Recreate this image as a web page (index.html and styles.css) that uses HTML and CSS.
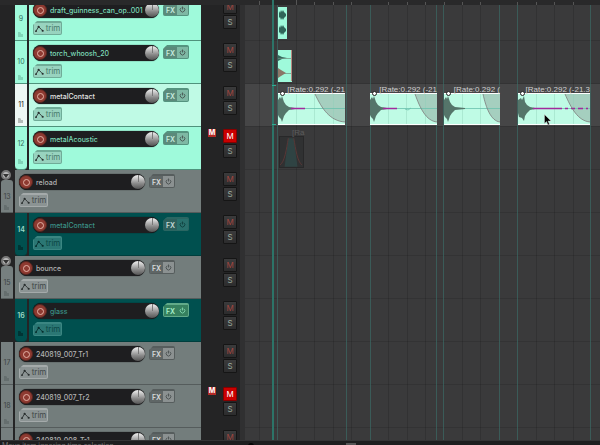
FILE: index.html
```html
<!DOCTYPE html>
<html lang="en">
<head>
<meta charset="utf-8">
<title>Arrange</title>
<link rel="stylesheet" href="styles.css">
</head>
<body>
<svg class="defs" aria-hidden="true">
  <symbol id="env" viewBox="0 0 10 8"><path d="M1 7 L4 2 L7 5 L9 7" fill="none" stroke="currentColor"/><circle cx="1" cy="7" r="1"/><circle cx="4" cy="2" r="1.2"/><circle cx="8.6" cy="6.6" r="1.2"/></symbol>
  <symbol id="power" viewBox="0 0 8 8"><path d="M2.6 2 A2.6 2.6 0 1 0 5.4 2 M4 .6 V4" fill="none" stroke="currentColor" stroke-width=".9"/></symbol>
  <symbol id="folder" viewBox="0 0 6 5"><path d="M0 0h2l1 1v1h2v3H0z" opacity=".8"/></symbol>
</svg>
<div class="ruler"><svg width="355" height="5" aria-hidden="true"><path d="M14.5 1v4M51.5 0v5M69.5 2v3M88.5 2v3M106.5 2v3M143.5 2v3M162.5 2v3M180.5 2v3M199.5 2v3M217.5 2v3M235.5 2v3M272.5 2v3M291.5 2v3M309.5 2v3M328.5 2v3" stroke="#555"/><path d="M28 0v5" stroke="#2c7468" stroke-width="2"/></svg></div>
<main class="main">
  <section class="tracks" id="tracks" aria-label="Tracks"></section>
  <section class="arrange" aria-label="Timeline">
    <div class="lanes">
      <div class="lane">
        <div class="item mint" style="left:33px;width:9px"><svg viewBox="0 0 9 31"><path d="M1 4l1 2 1-3 1 2 1-2 1 2 2 2v2l-2 2-1 2-1-2-1 2-1-3-1 1zM1 19l1 2 1-3 1 2 1-2 1 2 2 2v2l-2 2-1 2-1-2-1 2-1-3-1 1z" fill="#2f6659"/></svg></div>
      </div>
      <div class="lane">
        <div class="item mint" style="left:33px;width:14px"><svg viewBox="0 0 14 31"><path d="M0 5l4 2 5 1-5 1-4 2z" fill="#35695c"/><path d="M0 8.500h14M0 23.500h14" stroke="#6f8f80" stroke-width=".7"/><path d="M0 18l3 2 5 3-5 3-3 2z" fill="#8a7768"/><path d="M13.500 0v31" stroke="#b98981"/></svg></div>
      </div>
      <div class="lane selected">
        <div class="item sel" style="left:33px;width:67px"><span class="label">[Rate:0.292 (-21</span><svg viewBox="0 0 67 30"><path class="fade" d="M37 0C44 15 52 27 67 28V0z"/><path class="grid" d="M18.500 0v31M36.500 0v31M55.500 0v31"/><path class="line" d="M14 14.500h53"/><path class="wave" d="M0 6l2-3 1 2 1-3 2 6 2 3 3 2 6 1v1l-6 1-3 3-2 3-2 6-1-3-2-2-2-4z"/><path class="hot" d="M13 14.500h14"/><path class="curve" d="M37 0C44 15 52 27 67 28"/></svg><i class="pin"></i></div>
        <div class="item sel" style="left:125px;width:67px"><span class="label">[Rate:0.292 (-21</span><svg viewBox="0 0 67 30"><path class="fade" d="M45 0C50 14 56 27 67 28V0z"/><path class="grid" d="M18.500 0v31M36.500 0v31M55.500 0v31"/><path class="line" d="M14 14.500h53M35 15l3 1 3-2"/><path class="wave" d="M0 6l2-3 1 2 1-3 2 6 2 3 3 2 6 1v1l-6 1-3 3-2 3-2 6-1-3-2-2-2-4z"/><path class="hot" d="M13 14.500h14"/><path class="curve" d="M45 0C50 14 56 27 67 28"/></svg><i class="pin"></i></div>
        <div class="item sel" style="left:199px;width:56px"><span class="label">[Rate:0.292 (</span><svg viewBox="0 0 56 30"><path class="fade" d="M39 0C42 14 47 27 56 28V0z"/><path class="grid" d="M18.500 0v31M36.500 0v31"/><path class="line" d="M14 14.500h42"/><path class="wave" d="M0 6l2-3 1 2 1-3 2 6 2 3 3 2 10 1v1l-10 1-3 3-2 3-2 6-1-3-2-2-2-4z"/><path class="curve" d="M39 0C42 14 47 27 56 28"/></svg><i class="pin"></i></div>
        <div class="item sel" style="left:273px;width:72px"><span class="label">[Rate:0.292 (-21.3</span><svg viewBox="0 0 72 30"><path class="fade" d="M47 0C53 14 60 27 72 28V0z"/><path class="grid" d="M18.500 0v31M36.500 0v31M55.500 0v31"/><path class="line" d="M14 14.500h58"/><path class="wave" d="M0 6l3-2 1 2 2-4 1 6 2 3 3 2 5 1v1l-5 1-3 3-2 3-1 5-2-3-3-1-1-4z"/><path class="hot" d="M15 14.500h29M47 14.500h3M53 14.500h4M60 14.500h5M68 14.500h2"/><path class="curve" d="M47 0C53 14 60 27 72 28"/></svg><i class="pin"></i></div>
      </div>
      <div class="lane">
        <div class="item muted" style="left:34px;width:25px"><span class="label">[Ra</span><svg viewBox="0 0 25 31"><path d="M9 0h6l4 31H5z" fill="#2f4343"/><path d="M0 29C5 26 7 12 9 0M24 29C19 26 17 12 15 0" fill="none" stroke="#5b3836"/></svg></div>
      </div>
      <div class="lane"></div><div class="lane"></div><div class="lane"></div><div class="lane"></div><div class="lane"></div><div class="lane"></div><div class="lane"></div>
    </div>
    <svg class="markers" width="355" height="435" aria-hidden="true">
      <path d="M14.500 0v435M51.500 0v435M69.500 0v435M88.500 0v435M106.500 0v435M143.500 0v435M162.500 0v435M180.500 0v435M217.500 0v435M235.500 0v435M291.500 0v435M309.500 0v435M328.500 0v435" stroke="#000" opacity=".13"/>
      <path d="M32.500 0v435M101.500 0v435M125.500 0v435M191.500 0v435M198.500 0v435M254.500 0v435M272.500 0v435M345.500 0v435" stroke="#3a6e68" opacity=".65"/>
      <path d="M28 0v435" stroke="#2c7468" stroke-width="2"/>
      <path d="M27 80.500h4M27 119.500h4" stroke="#2fae93"/>
    </svg>
    <svg class="cursor" viewBox="0 0 8 12" aria-hidden="true"><path d="M.5 .5v9l2-2 1.500 3.500 1.500-.7L4 7h3z" stroke="#ddd" stroke-width=".4"/></svg>
  </section>
</main>
<footer class="status"><span class="hint">Move item ignoring time selection</span><span class="scroll"><i class="end"></i><i class="thumb"></i></span></footer>
<script src="tracks.js"></script>
</body>
</html>
```
FILE: styles.css
```css
* { box-sizing: border-box; }
body { margin: 0; height: 100vh; display: flex; flex-direction: column; overflow: hidden; background: #242425; font-family: Inter, "Liberation Sans", sans-serif; font-size: 7px; line-height: 9px; }
button { font: inherit; padding: 0; margin: 0; border: 0; }
.defs { position: absolute; width: 0; height: 0; }
.ruler { flex: none; height: 5px; padding-left: 245px; background: #29292a; }
.ruler svg { display: block; }
.main { flex: 1; min-height: 0; display: flex; overflow: hidden; }
.tracks { flex: none; width: 240px; margin-top: -7px; }
.track { display: flex; height: 43px; }

.gutter { width: 15px; padding-left: 1px; display: flex; flex-direction: column; flex: none; }
.fold { width: 10px; height: 10px; flex: none; border-radius: 50%; background: #b8b8b8; border: 2px solid #777; display: flex; align-items: center; justify-content: center; }
.fold svg { width: 6px; height: 5px; flex: none; }
.num { width: 12px; flex: 1; display: flex; flex-direction: column; justify-content: flex-end; align-items: center; gap: 9px; padding-bottom: 3px; color: #3c4343; background: #767f7f; border-bottom: 1px solid #555c5c; }
.num svg { width: 6px; height: 5px; opacity: .35; fill: currentColor; }
.gutter .num { border-radius: 3px 3px 0 0; gap: 4px; padding-bottom: 2px; }
.plain .gutter .num { border-radius: 0; gap: 9px; padding-bottom: 3px; }
.child .num { flex: none; margin-right: 2px; }
.body { flex: 1; padding: 4px; border-bottom: 1px solid #555c5c; background: #737d7c; display: flex; flex-direction: column; align-items: flex-start; gap: 3px; color: #343b3b; }
.row { display: flex; gap: 4px; }
.mint .num, .mint .body { background: #9ffadb; border-color: #4f927c; color: #35735f; }
.picked .num, .picked .body { background: #bffae5; border-color: #4f927c; color: #35735f; }
.picked .num { background: #eef7f4; color: #222; }
.teal .num, .teal .body { background: #00504f; border-color: #003e3d; color: #9ed9c6; }
.teal .num { font-weight: 600; }
.teal .num svg { color: #001f1f; opacity: .7; }
.last .num { border-radius: 0 0 4px 4px; padding-bottom: 5px; gap: 11px; }

.pill { width: 126px; height: 16px; border-radius: 8px; background: #1e1e20; display: flex; align-items: center; box-shadow: 0 0 1px #000; color: #b2b2b2; }
.rec { width: 14px; height: 14px; flex: none; border-radius: 50%; background: #8e3a31; border: 1px solid #55251f; display: flex; align-items: center; justify-content: center; }
.rec i { width: 7px; height: 7px; border-radius: 50%; border: 1px solid #e4b1a5; }
.name { flex: 1; width: 90px; padding-left: 3px; white-space: nowrap; overflow: hidden; font-weight: 500; }
.knob { width: 14px; height: 14px; flex: none; border-radius: 50%; background: linear-gradient(#f2f2f2, #8b8b8b 60%, #555); display: flex; justify-content: center; }
.knob i { width: 1px; height: 7px; background: #777; }
.mint .name { color: #7ddcb9; }
.picked .name { color: #e2e2e2; }
.teal .name { color: #3b9186; }

.fx { width: 26px; height: 14px; display: flex; background: #8b9191; border: 1px solid #565d5d; border-radius: 2px; clip-path: polygon(4px 0, 100% 0, 100% 100%, 0 100%, 0 4px); color: #d6dada; align-items: stretch; }
.fx b { width: 13px; background: #5f6666; font-weight: 600; line-height: 13px; }
.fx span { flex: 1; display: flex; align-items: center; justify-content: center; color: #414747; }
.fx svg { width: 7px; height: 7px; }
.mint .fx, .picked .fx { background: #7eb8a4; border-color: #55937f; }
.mint .fx b, .picked .fx b { background: #5b8a7b; color: #c5eadd; }
.teal .fx { background: #28706c; border-color: #2a6662; }
.teal .fx b { background: #2c5f5c; color: #c1d7d3; }
.teal .fx span { color: #0d3938; }
.teal .fx.on, .teal .fx.on b { background: #36805f; border-color: #61aa89; color: #a6efc9; }
.teal .fx.on span { color: #8be2b9; }
.trim { width: 29px; height: 14px; display: flex; align-items: center; justify-content: center; gap: 2px; color: #414848; background: #8b9393; border: 1px solid #a4aaaa; border-radius: 2px; clip-path: polygon(4px 0, 100% 0, 100% 100%, 0 100%, 0 4px); font-size: 8px; }
.trim svg { width: 9px; height: 7px; color: #262c2c; fill: currentColor; }
.mint .trim, .picked .trim { background: #98d3bf; border-color: #70ac98; color: #487c6c; }
.teal .trim { background: #2b7774; border-color: #3b8682; color: #0b4644; }
.teal .trim svg { color: #062c2b; }
.fx, .trim { background-clip: border-box; border-top-width: 2px; }

.side { width: 39px; flex: none; display: flex; gap: 7px; padding: 2px 3px 0 7px; }
.badge { width: 8px; height: 8px; background: #b32b27; color: #fff; line-height: 8px; font-weight: 700; text-align: center; visibility: hidden; }
.muted .badge { visibility: visible; }
.ms { display: flex; flex-direction: column; gap: 1px; }
.ms button { width: 14px; height: 14px; background: linear-gradient(#3b3b3c, #2c2c2d); border: 1px solid #151515; border-radius: 1px; font-size: 8px; line-height: 12px; }
.ms .m { color: #a34640; }
.ms .s { color: #9eaa9e; }
.muted .ms .m { background: #c90000; color: #fff; border-color: #850000; }

.arrange { flex: 1; min-width: 0; position: relative; overflow: hidden; border-left: 5px solid #303031; background: #3a3a3b; }
.lanes { margin-top: -7px; }
.lane { height: 43px; position: relative; border-bottom: 1px solid #333334; }
.lane.selected { background: #464647; }
.item { position: absolute; z-index: 1; top: 9px; height: 32px; }
.item svg { display: block; width: 100%; height: 31px; }
.item.mint { background: #9ffadb; }
.item.sel { background: #bffbe5; border-top: 1px solid #fff; border-bottom: 1px solid #fff; }
.item.sel svg { height: 30px; }
.item.muted { background: #303132; border: 1px solid #282829; }
.label { position: absolute; right: 0; bottom: 100%; color: #d0d0d0; white-space: nowrap; font-family: "Liberation Sans", sans-serif; font-size: 8px; }
.muted .label { color: #5c5c5c; left: 12px; right: auto; }
.fade { fill: #a5cfbf; }
.curve { fill: none; stroke: #776d70; stroke-width: .7; }
.grid { stroke: #8ecfb8; opacity: .4; }
.line { fill: none; stroke: #69c1ad; stroke-width: .8; }
.wave { fill: #55756a; }
.hot { stroke: #a12a9c; stroke-width: 1.5; }
.pin { position: absolute; left: 2px; top: -3px; width: 5px; height: 5px; border: 1px solid #222; border-radius: 50%; background: #fff; }
.markers { position: absolute; left: 0; top: 0; }
.cursor { position: absolute; z-index: 2; left: 299px; top: 109px; width: 8px; height: 12px; }

.status { flex: none; height: 5px; display: flex; border-top: 1px solid #343435; background: #1e1e1f; color: #777; overflow: hidden; }
.hint { width: 245px; flex: none; padding-left: 2px; }
.scroll { flex: 1; display: flex; gap: 92px; padding: 2px 3px; }
.end { width: 6px; height: 6px; border-radius: 50%; background: #050505; }
.thumb { width: 10px; height: 3px; background: #555; }
```
FILE: tracks.js
```js
const tracks = [
  { n: 9, name: "draft_guinness_can_op..001", kind: "mint", child: true },
  { n: 10, name: "torch_whoosh_20", kind: "mint", child: true },
  { n: 11, name: "metalContact", kind: "picked", child: true },
  { n: 12, name: "metalAcoustic", kind: "mint", child: true, last: true, muted: true },
  { n: 13, name: "reload", kind: "gray", folder: true },
  { n: 14, name: "metalContact", kind: "teal", child: true, last: true },
  { n: 15, name: "bounce", kind: "gray", folder: true },
  { n: 16, name: "glass", kind: "teal", child: true, last: true, fxOn: true },
  { n: 17, name: "240819_007_Tr1", kind: "gray plain" },
  { n: 18, name: "240819_007_Tr2", kind: "gray plain", muted: true },
  { n: "", name: "240819_008_Tr1", kind: "gray plain" }
];

const number = t => `<div class="num"><span>${t.n}</span><svg><use href="#folder"/></svg></div>`;
const fold = `<button class="fold" aria-label="Fold"><svg viewBox="0 0 6 5"><path d="M0 1h6L3 5z" fill="#333"/></svg></button>`;

document.getElementById("tracks").innerHTML = tracks.map(t => `
  <div class="track ${t.kind} ${t.child ? "child" : ""} ${t.last ? "last" : ""} ${t.muted ? "muted" : ""}">
    <div class="gutter">${t.folder ? fold : ""}${t.child ? "" : number(t)}</div>
    ${t.child ? number(t) : ""}
    <div class="body">
      <div class="row">
        <div class="pill">
          <button class="rec" aria-label="Record arm"><i></i></button>
          <span class="name">${t.name}</span>
          <button class="knob" aria-label="Volume"><i></i></button>
        </div>
        <button class="fx ${t.fxOn ? "on" : ""}"><b>FX</b><span><svg><use href="#power"/></svg></span></button>
      </div>
      <button class="trim"><svg><use href="#env"/></svg>trim</button>
    </div>
    <div class="side">
      <span class="badge">M</span>
      <div class="ms"><button class="m">M</button><button class="s">S</button></div>
    </div>
  </div>`).join("");
```
